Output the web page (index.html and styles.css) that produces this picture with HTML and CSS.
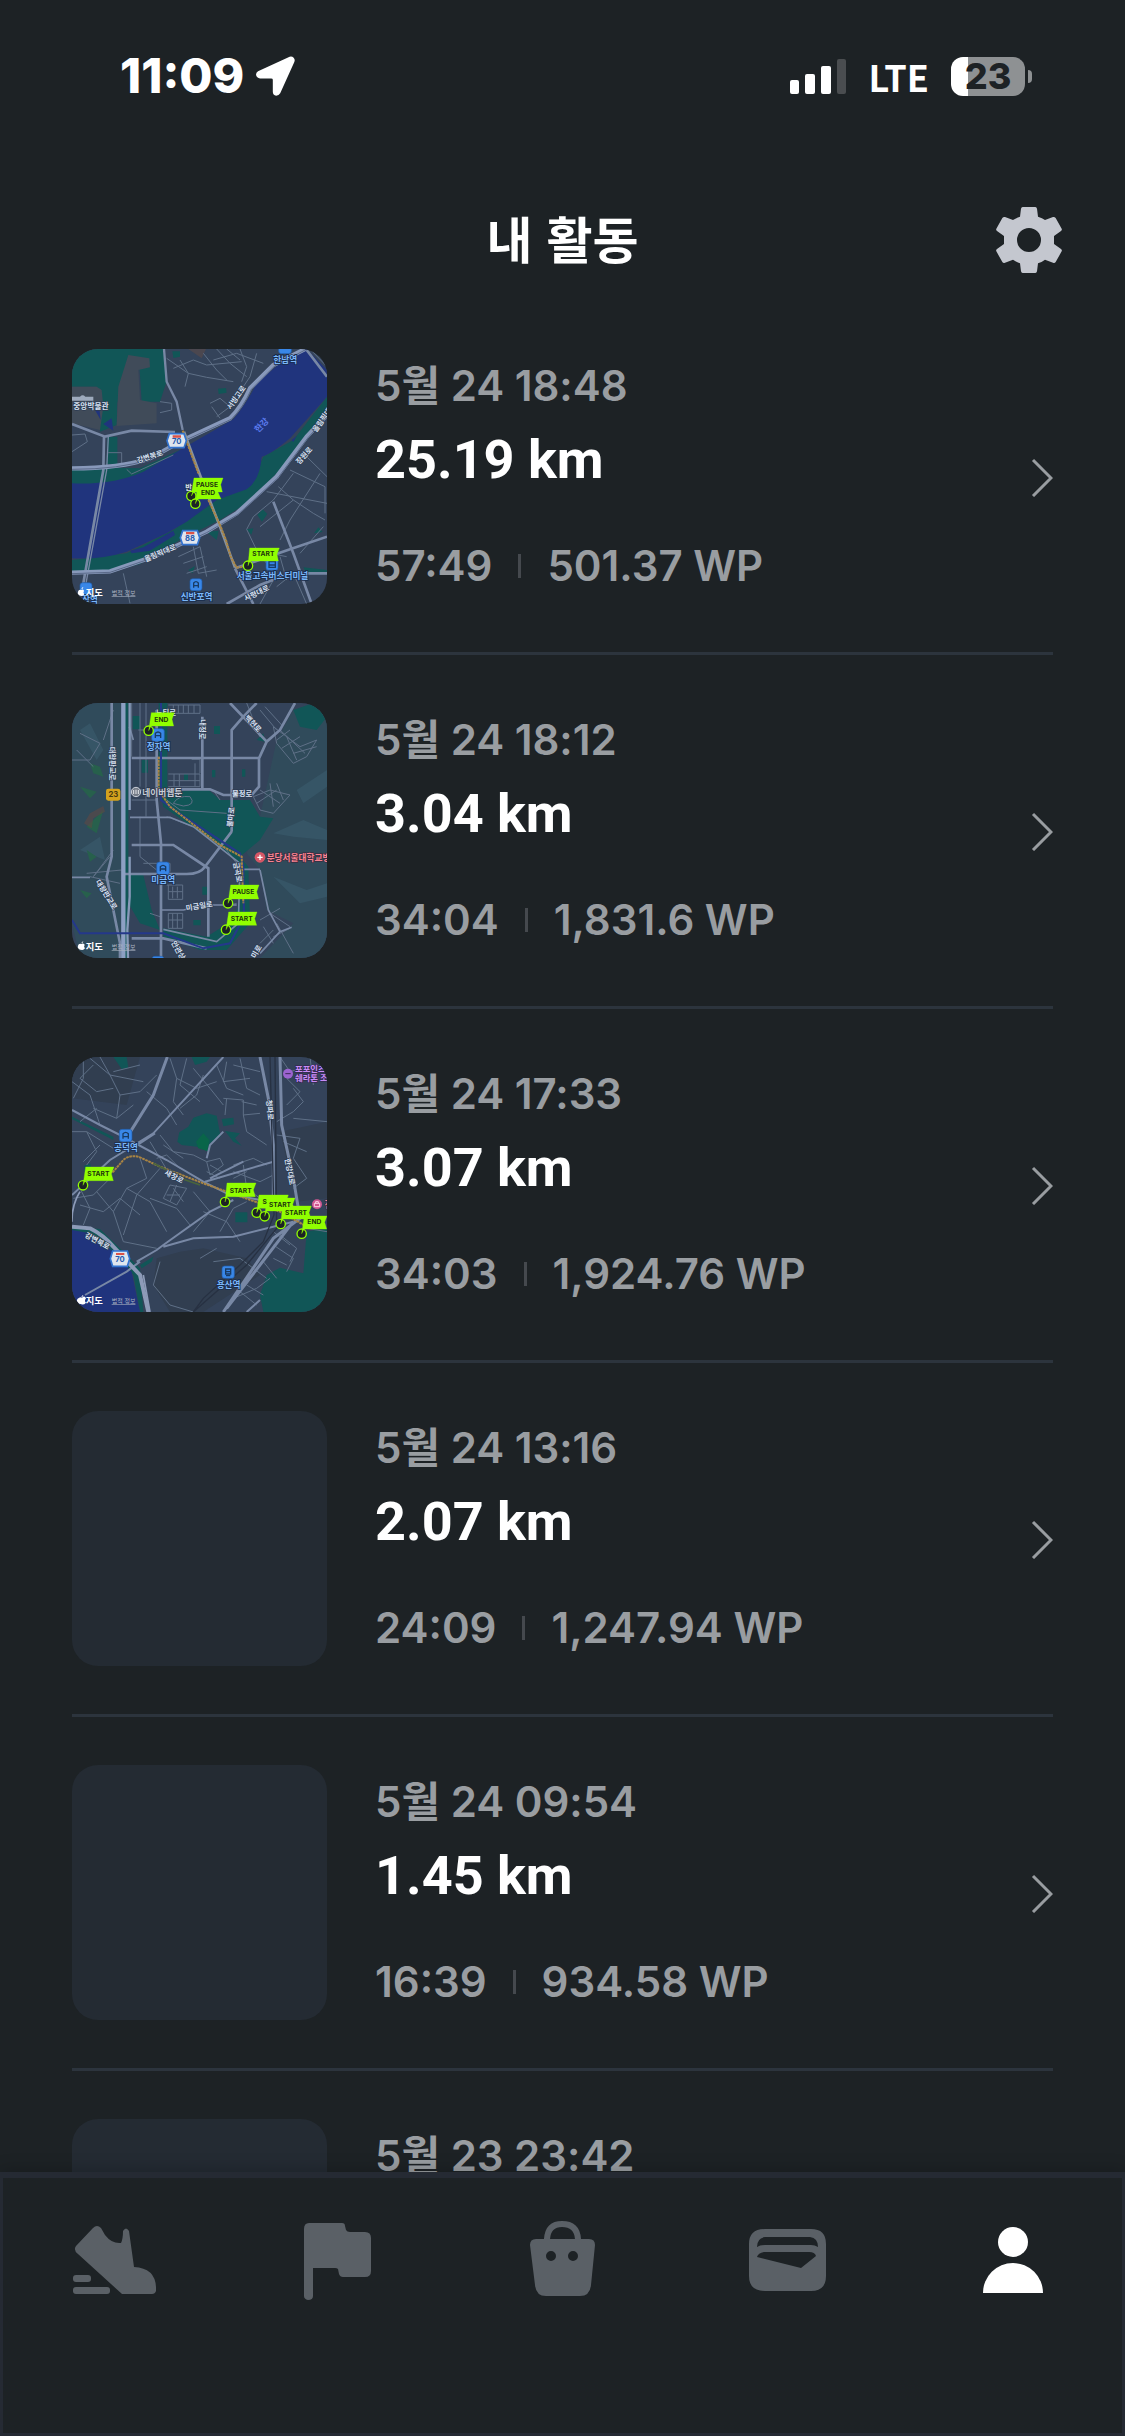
FILE: index.html
```html
<!DOCTYPE html>
<html lang="ko">
<head>
<meta charset="utf-8">
<meta name="viewport" content="width=device-width, initial-scale=1">
<title>내 활동</title>
<link rel="stylesheet" href="styles.css">
</head>
<body>
<div class="app">
  <div class="status">
    <div class="status-side">
      <span class="clock">11:09</span>
      <svg class="locate" viewBox="596 83 116 117" aria-hidden="true"><path fill="#fff" d="M602 127 696 84Q703 82 708 87 713 93 710 100L668 193Q664 200 656 200 646 198 646 188V153Q646 149 641 149H608Q598 148 596 138 596 131 602 127Z"/></svg>
    </div>
    <div class="status-side status-right">
      <svg class="signal" viewBox="0 0 56 35" aria-hidden="true"><g fill="#fff"><rect y="21" width="9" height="14" rx="2"/><rect x="15" y="15" width="10" height="20" rx="2"/><rect x="31" y="7" width="10" height="28" rx="2"/></g><rect x="47" width="9" height="35" rx="2" fill="#4a4d50"/></svg>
      <span class="network">LTE</span>
      <div class="battery"><span class="level">23</span><span class="nub"></span></div>
    </div>
  </div>

  <header class="header">
    <h1 class="title">내 활동</h1>
    <button class="settings" type="button" aria-label="설정">
      <svg viewBox="708 531 198 198" aria-hidden="true"><path fill="#c4c7cf" fill-rule="evenodd" d="M788 531H826Q830 531 831 536L834 560Q847 564 855 570L879 561Q884 560 887 564L905 596Q907 600 903 603L882 618V642L903 657Q907 660 905 664L887 696Q884 700 879 698L855 689Q846 696 834 700L831 724Q830 729 826 729H788Q784 729 783 724L780 700Q769 696 759 689L735 698Q730 700 727 696L709 664Q707 660 711 657L732 642V618L711 603Q707 600 709 596L727 564Q730 560 735 561L759 570Q768 564 780 560L783 536Q784 531 788 531ZM807 594A36 36 0 1 0 807 666 36 36 0 1 0 807 594Z"/></svg>
    </button>
  </header>

  <main class="list">
    <a class="row" href="#a1">
      <svg class="thumb" viewBox="36 27 765 765" aria-hidden="true">
        <rect class="land" x="36" y="27" width="765" height="765"/>
        <path class="park" d="M36 27H312L318 130 300 185H245L238 75H205L172 190 170 255 120 275 110 140H36ZM142 290H172V372H140ZM36 380 240 385 360 330 372 355 210 430 36 440ZM337 34H360V50L340 54ZM474 146 498 144 500 158 476 162ZM36 660 200 640 340 570 470 480 570 440 610 350 700 300 801 170V225L700 350 560 490 480 540 360 600 240 672 130 700H36ZM592 525 608 508 622 522 606 545ZM560 568 580 565 574 584ZM385 690 405 678 398 700ZM762 580 775 562 788 576ZM730 682 801 690V703H740ZM440 575 476 572 470 600Z"/>
        <path fill="#404b59" d="M36 140H110L125 150 130 200 120 270 36 250ZM205 45 268 55 270 82 235 90 240 180 290 190 290 250 170 258 175 140Z"/><path fill="#4b474f" d="M385 27H438L425 55Z"/>
        <path class="water" d="M36 430Q160 435 250 395L360 330 520 238Q560 190 590 130L660 70 740 27 801 90V170L690 295Q630 345 605 350 600 420 560 448L470 480 380 545 320 580 200 635Q120 660 36 655ZM105 210 118 205 122 240ZM130 252 155 235 160 272ZM210 632 250 622 340 572 345 585 270 632 215 640ZM695 300 710 288 700 306ZM325 362 372 342 374 350 330 368Z"/>
        <g class="lane"><path d="M320 55 385 100 440 112 520 125M340 85 400 60 440 75 545 65M430 40 470 90 500 120M460 60 530 40 610 70M540 27 560 80 545 125M470 27 510 70 560 110M360 60 385 100 375 140M500 27 540 60M590 40 570 110 550 140M300 185 335 190V210L300 218M450 190 480 175 510 200 530 160M455 200 480 235M470 230 510 200M36 285 75 282 82 305 36 335M145 338H185V370M200 388 215 402 340 345M640 480 580 530 560 568 585 620 640 700M655 440 700 480 760 520 795 540M690 390 795 440V520M700 400 640 480M740 350 801 410M620 455 801 490M600 560 700 480M780 400 690 540 660 600M720 640 790 560M355 650 420 620 440 710M370 670 430 650M380 700 440 680M400 620 415 700 470 690M190 700 210 790M640 720 600 792M650 740 700 700 740 792M660 650 680 720M630 640 680 650M750 27 801 80"/></g>
        <g class="road"><path stroke-width="7" d="M312 27 320 125 350 185 368 270"/><path stroke-width="8" d="M36 252 135 290 215 272 345 276M132 290 130 390 70 730M801 590 690 628 525 685M640 485 700 640 755 792M525 685 580 792M500 792 600 735 690 700 801 700M740 30 801 110"/><path stroke-width="4" d="M145 290 140 390 78 730"/></g>
        <path fill="none" stroke="#8899bb" stroke-width="13" d="M36 385Q180 385 270 355L370 300 510 235Q545 200 570 145L640 75 735 27M36 698 150 694 280 650 440 575 530 520 650 410 740 290 801 225"/>
        <path fill="none" stroke="#42516f" stroke-width="2" d="M36 388Q180 388 270 358L370 303 514 238Q549 203 574 148L644 78 735 30M36 701 150 697 280 653 440 578 534 523 654 413 744 293 801 230"/>
        <path fill="none" stroke="#8793a0" stroke-width="8" d="M372 275 420 405 480 560 525 683"/><path class="route" d="M368 272 415 400M445 480 480 555 498 600 512 650 530 683 565 678"/>
        <g class="label"><text x="40" y="206" font-size="23">중앙박물관</text><text transform="translate(233 369) rotate(-17)">강변북로</text><text transform="translate(257 666) rotate(-23)">올림픽대로</text><text transform="translate(512 210) rotate(-55)">서빙고로</text><text transform="translate(718 374) rotate(-48)">잠원로</text><text transform="translate(769 278) rotate(-55)">올림픽대로</text><text transform="translate(557 784) rotate(-26)">사평대로</text><text x="376" y="450">반</text></g>
        <g class="station"><rect x="656" y="5" width="38" height="36" rx="8"/><rect x="390" y="716" width="36" height="36" rx="8"/><rect x="618" y="655" width="36" height="36" rx="8"/><rect x="60" y="728" width="36" height="36" rx="8"/></g>
        <g class="blue"><text x="640" y="68">한남역</text><text x="530" y="718">서울고속버스터미널</text><text x="362" y="780">신반포역</text><text x="66" y="790">작역</text><text class="river" transform="translate(595 279) rotate(-46)">한강</text></g>
        <g fill="none" stroke="#183b64" stroke-width="4"><path d="M401 743V729Q408 721 415 729V743M401 737H415M627 665H646V682H627ZM627 675H646"/></g>
        <g class="shield"><path d="M328 281H372L379 302 372 323H328L321 302Z"/><path d="M368 572H412L419 593 412 614H368L361 593Z"/></g><path fill="#dc5348" d="M338 286H363V293H338ZM378 576H403V583H378Z"/><g class="number"><text x="350" y="313">70</text><text x="390" y="604">88</text></g>
        <path fill="#9daabd" d="M36 170H60Q68 162 76 170H100V182H36Z"/>
        <g class="pin"><circle cx="394" cy="468" r="14"/><path d="M402 414H489L482 434 487 456H395Z"/><circle cx="406" cy="491" r="14"/><path d="M412 438H483L474 457 483 477H408ZM394 468 400 450 404 452ZM406 491 410 472 414 474Z"/><circle cx="564" cy="677" r="14"/><path d="M569 624H658L651 643 655 663H570L564 677Z"/></g>
        <g class="flag-text"><text x="441" y="442">PAUSE</text><text x="444" y="465">END</text><text x="610" y="648">START</text></g>
        <g class="credit"><path d="M55 752Q60 747 64 750 69 746 72 752 68 758 73 763 68 770 63 767 56 769 53 760ZM64 748Q65 742 70 741 70 747 64 748Z"/><text x="77" y="767">지도</text><text class="legal" x="155" y="766">법적 정보</text></g>
      </svg>
      <div class="info"><p class="date">5월 24 18:48</p><p class="distance">25.19 km</p><p class="stats"><span>57:49</span><span class="bar"></span><span>501.37 WP</span></p></div>
      <svg class="chevron" viewBox="0 0 22 39" aria-hidden="true"><path d="M2 2 20 20 2 38"/></svg>
    </a>

    <a class="row" href="#a2">
      <svg class="thumb" viewBox="36 39 765 765" aria-hidden="true">
        <rect class="land" x="36" y="39" width="765" height="765"/>
        <path fill="#304b5b" d="M36 39H185V804H60L36 700ZM650 150 700 60 801 39V804H600L700 700 620 660 600 540 560 490 600 380Z"/>
        <path fill="#365566" d="M710 300 801 240V290L730 340ZM640 430 730 390 801 420V450L700 440ZM640 560 740 600 801 580V620L720 640ZM90 100 130 180 110 210 60 120ZM60 480 120 440 135 510Z"/>
        <path class="park" d="M190 39H205V804H190ZM296 39H322V310L440 295 480 330H570L600 380 640 385 600 450 540 500 565 530 570 700 500 780 420 780 310 740V715L440 740 520 690 545 620 550 530 480 470 310 350 296 290ZM210 555H250L275 660 300 720 240 700 205 640ZM700 60 760 39 801 80 770 120 720 110ZM218 78H240V118H218ZM245 210H264V248H245ZM462 108H480V132H462ZM456 240H466V262H456ZM546 238H556V260H546ZM427 590H447V614H427ZM400 690H422V706H400ZM372 252H384V272H372ZM590 150 610 130 615 155Z"/>
        <path fill="#27604c" d="M90 220 120 230 130 260 100 250ZM60 290 110 305 90 325ZM80 410 130 360 110 430ZM80 480 110 500 90 515ZM60 600 95 610 80 625Z"/><path fill="#65483f" opacity=".5" d="M72 400 90 370 130 348 135 365 100 385 95 415Z"/>
        <g class="lane"><path d="M215 39V200M240 39V290M258 39V380M235 120H290M325 45H420V70H325M340 45V70M355 45V70M370 45V70M385 45V70M402 45V70M325 252H420V290H325M395 208H420V250M405 220V290M342 252V290M358 252V290M325 272H420M215 330H290M215 300H290M240 380V500L290 540M320 380 400 410 500 480 530 520M320 585H368V628H325V585M338 590V625M352 590V625M325 605H368M325 670H368V715H325ZM338 670V715M352 670V715M325 690H368M250 550H300M250 520H330V545M300 680 270 670M560 80 600 140 560 39M600 60 650 120M615 50 665 105M640 110 720 170 770 150 740 200 700 220 650 160ZM660 120 735 190M680 140 710 210M650 150 690 120M665 175 720 140M700 190 770 170M580 320 630 300 690 315 640 370 600 360ZM630 280 640 350M600 300 660 340M650 280 670 330M590 340 650 300M340 340Q355 315 390 320 410 345 370 348ZM460 300 480 330M320 330 360 360 500 370M36 210H90L120 160 60 130M50 180 100 230M130 150 160 60M100 560 150 500M100 560 160 480M90 560 180 580M80 550 185 540M640 720 600 760M650 700 700 790M600 690 660 655M630 670 690 710M610 710 640 760M640 740 690 715M490 650 530 640"/></g>
        <g class="road"><path stroke-width="8" d="M155 39V500L140 560 180 760V804M215 204H597M320 298H450L490 315H580M290 60V330L303 460V804M427 80V300M515 425V120L550 80 590 39M510 39 620 155M705 39 660 120 620 155 597 205V290L575 315M515 425 435 530Q420 552 380 552H195M215 465H340L370 485 445 535V740M215 745H310L440 775"/><path stroke-width="5" d="M36 562H90M208 110 220 150M210 382H330L400 410 540 520 535 700 470 755 310 718M600 540 625 660 660 725 695 712M550 538H600M300 660H370L440 645H530M660 725 600 790"/></g>
        <path fill="none" stroke="#8da0c3" stroke-width="13" d="M190 39V804"/><path fill="none" stroke="#8799b8" stroke-width="7" d="M209 39V360M209 500V620L202 720 204 804"/>
        <path fill="none" stroke="#24388b" stroke-width="6" d="M303 39V330L350 365 540 490 550 530 552 680 510 760 430 775 310 730H60L36 690"/><path class="route" d="M296 200V300L330 350 480 465 545 500 550 640"/>
        <g class="label"><text transform="translate(150 170) rotate(90)">대왕판교로</text><text transform="translate(420 88) rotate(90)">내정로</text><text transform="translate(553 84) rotate(47)">백현로</text><text x="516" y="319">불정로</text><text transform="translate(517 412) rotate(-84)">불마로</text><text transform="translate(520 518) rotate(80)">금곡로</text><text transform="translate(106 575) rotate(58)">대왕판교로</text><text transform="translate(379 662) rotate(-9)">미금일로</text><text transform="translate(333 758) rotate(60)">안관상</text><text transform="translate(586 806) rotate(-60)">미로</text><text x="287" y="76">느티로</text></g>
        <text x="247" y="317" class="place">네이버웹툰</text><circle cx="228" cy="306" r="14" fill="#747b87" stroke="#cad0da" stroke-width="3"/><path stroke="#e6e8ec" stroke-width="3" d="M221 300V312M228 299V312M235 300V312"/>
        <g class="station"><rect x="275" y="116" width="38" height="38" rx="8"/><rect x="290" y="516" width="38" height="38" rx="8"/><rect x="276" y="799" width="36" height="30" rx="8"/></g><path fill="none" stroke="#183b64" stroke-width="4" d="M286 144V130Q294 122 302 130V144M286 137H302M301 544V530Q309 522 317 530V544M301 537H317"/>
        <g class="blue"><text x="260" y="180">정자역</text><text x="274" y="580">미금역</text></g>
        <rect x="138" y="296" width="43" height="36" rx="7" fill="#d4a21d"/><text class="number dark" x="160" y="321">23</text>
        <circle cx="600" cy="502" r="16" fill="#d65766"/><path stroke="#fff" stroke-width="4" d="M592 502H608M600 494V510"/><text class="hospital" x="620" y="513">분당서울대학교병원</text>
        <g class="pin"><circle cx="266" cy="122" r="14"/><path d="M274 68H343L336 88 341 108H273L266 122Z"/><circle cx="504" cy="640" r="14"/><path d="M512 585H597L590 605 596 627H511L504 640Z"/><circle cx="498" cy="719" r="14"/><path d="M506 666H591L584 686 590 706H505L498 719Z"/></g>
        <g class="flag-text"><text x="304" y="95">END</text><text x="550" y="612">PAUSE</text><text x="545" y="692">START</text></g>
        <g class="credit"><path d="M55 764Q60 759 64 762 69 758 74 764 70 770 75 775 70 782 63 779 56 781 53 772ZM64 760Q65 755 70 754 70 759 64 760Z"/><text x="77" y="779">지도</text><text class="legal" x="155" y="778">법적 정보</text></g>
      </svg>
      <div class="info"><p class="date">5월 24 18:12</p><p class="distance">3.04 km</p><p class="stats"><span>34:04</span><span class="bar"></span><span>1,831.6 WP</span></p></div>
      <svg class="chevron" viewBox="0 0 22 39" aria-hidden="true"><path d="M2 2 20 20 2 38"/></svg>
    </a>

    <a class="row" href="#a3">
      <svg class="thumb" viewBox="36 36 765 765" aria-hidden="true">
        <rect class="land" x="36" y="36" width="765" height="765"/>
        <path fill="#313e50" d="M360 620 430 610 560 640 600 690 430 801H330L280 720 290 640ZM36 36H240L200 180 36 160ZM660 260 801 230V460L710 470Z"/>
        <path class="park" d="M160 36H200L205 68 185 72ZM395 36H450L440 50 405 60ZM352 290 358 262 385 245 400 218 440 205 470 212 482 275 450 295 445 320 410 305 365 300ZM485 222 520 218 522 238 490 244ZM495 258 540 265 525 280 545 302 520 290ZM526 502H562V532H526ZM72 362 90 355 95 372 75 382ZM36 215 160 275V285L36 222ZM36 545 120 552 200 630 240 670 250 801H240L220 690 100 570 36 560ZM740 560 801 550V801H610L600 750 620 690 660 668 730 685ZM240 660 280 635 275 650 245 670Z"/><path fill="#096549" d="M408 290 430 265 448 285 442 318 415 310Z"/>
        <path class="water" d="M36 555 90 565 160 620 215 680 240 801H36Z"/>
        <g class="lane"><path d="M70 36V100L40 160M90 40 150 90 180 150 170 220M120 36 150 90 250 110M100 60 60 100 110 140 160 130M36 110 90 150 120 240M160 80 240 60M180 150 240 140 290 90M100 190 170 220 220 180M60 230 110 190M36 260 80 260 110 320 80 360M80 260 160 310M120 300 70 350M260 140 320 190 350 240M330 40 350 100 410 130 470 110M350 100 340 170 370 210M380 40 360 120 420 170M400 70 450 130 490 180M430 90 410 150 360 190M470 60 500 130 550 150M500 50 490 110 570 100M520 60 600 80M540 40 560 130 600 150M490 160 550 165V210L600 205M500 160 495 210M550 210 560 260 620 300M545 170 590 180M300 270 340 320 400 330 440 350M310 300 370 340M290 340 320 330 360 370M270 290 330 390M240 340 260 400 200 430 160 500M300 370 230 450 190 570M330 420 380 430 350 480 310 460ZM340 430 370 470M320 450 360 450M350 420 330 470M60 480 130 500 180 460 240 510M40 460 100 450 150 400M60 430 90 490 70 540M110 440 160 500 190 590 290 610M200 430 270 470 320 560M270 460 350 490 390 540M400 440 450 500 400 560M430 500 500 530 540 590M480 560 520 490 560 470M440 350 480 340 490 360 450 390ZM450 360 485 380M440 380 480 400M520 360 580 340 620 360M520 380 600 410 640 390M550 360 560 430 600 460M520 400 560 380M660 36 690 80 760 60M680 100 720 140 680 180M700 130 730 170 700 200 650 230M650 270 720 280 700 340M670 290 740 320M700 340 740 400 700 430M750 36 760 120M700 220 801 230M640 600 700 640 680 680M660 570 710 610 690 650M640 640 680 660M610 650 650 700M460 650 540 640 620 700M420 640 470 610M520 760 590 730 630 700M540 740 590 780M560 720 610 750M300 650 280 720 330 780 400 801M640 560 690 600M700 510 740 550 801 560"/></g>
        <g class="road"><path stroke-width="6" d="M36 195 120 240 180 270 320 345 430 410 500 445 600 465M36 450 150 345 280 265 490 36M180 300 240 295 285 265M310 600 450 500 520 465M435 410 640 350M310 605 400 580 520 575 700 530M230 650 290 615 310 600M75 750 200 680 240 650M600 765 560 801M450 400 550 350M440 340 450 300 490 260"/><path stroke-width="9" d="M322 36 280 150 180 310M600 36 625 160 640 300V450M660 36 665 240 700 400 720 520 640 580 490 801M700 530 500 790"/></g>
        <path fill="none" stroke="#273142" stroke-width="4" d="M630 36 642 510 610 590 540 660 430 760 400 801M645 36 650 550 560 660 400 801"/>
        <path fill="none" stroke="#8d9bb8" stroke-width="12" d="M36 545 90 550Q130 570 160 605L240 690 265 801"/>
        <path fill="none" stroke="#8d9bb8" stroke-width="5" d="M250 690 270 801M36 530Q35 480 60 440"/>
        <path class="route" d="M100 400 160 380 190 345Q210 327 240 337L300 365 430 415 500 440 600 475 660 500 740 545"/><path fill="none" stroke="#49653c" stroke-width="5" d="M280 355 320 375M370 403 420 420"/>
        <g class="label"><text transform="translate(312 388) rotate(27)">새창로</text><text transform="translate(73 575) rotate(29)">강변북로</text><text transform="translate(619 165) rotate(85)">청파로</text><text transform="translate(674 342) rotate(79)">한강대로</text></g>
        <g class="station"><rect x="178" y="253" width="38" height="37" rx="8"/><rect x="486" y="663" width="37" height="37" rx="8"/></g><path fill="none" stroke="#183b64" stroke-width="4" d="M189 281V266Q197 258 205 266V281M189 275H205M497 672H512V687H497ZM497 680H512M498 692H511"/>
        <g class="blue"><text x="162" y="318">공덕역</text><text x="470" y="728">용산역</text></g>
        <g class="shield"><path d="M158 618H202L209 641 202 664H158L151 641Z"/></g><path fill="#dc5348" d="M168 624H193V630H168Z"/><text class="number" x="180" y="651">70</text>
        <circle cx="684" cy="86" r="15" fill="#9b63cf"/><path stroke="#3d2658" stroke-width="3" d="M676 86H692"/><g class="hotel"><text x="705" y="81">포포인츠</text><text x="705" y="109">쉐라톤 조</text></g>
        <circle cx="771" cy="478" r="15" fill="#cf5690"/><path fill="none" stroke="#ffd3e7" stroke-width="3" d="M763 475H779V485H763ZM767 475V470H775V475"/><text class="hospital" x="794" y="488">전</text>
        <g class="pin"><circle cx="69" cy="421" r="14"/><path d="M77 366H162L154 386 160 407H76L69 421Z"/><circle cx="495" cy="471" r="14"/><path d="M501 414H588L580 435 586 455H501L495 471Z"/><circle cx="590" cy="503" r="14"/><path d="M597 450H685L678 470 684 490H597L590 503Z"/><circle cx="614" cy="514" r="14"/><path d="M621 459H705L698 478 704 498H621L614 514Z"/><circle cx="662" cy="537" r="14"/><path d="M668 483H754L747 503 753 522H669L662 537Z"/><circle cx="725" cy="566" r="14"/><path d="M733 513H801L794 532 800 552H732L725 566Z"/></g>
        <g class="flag-text"><text x="115" y="393">START</text><text x="542" y="443">START</text><text x="614" y="476">S</text><text x="660" y="486">START</text><text x="708" y="509">START</text><text x="763" y="537">END</text></g>
        <g class="credit"><path d="M52 762Q60 755 66 758 74 750 78 760 72 768 78 773 70 782 63 777 56 779 50 770ZM64 757Q65 751 70 750 70 756 64 757Z"/><text x="77" y="776">지도</text><text class="legal" x="155" y="775">법적 정보</text></g>
      </svg>
      <div class="info"><p class="date">5월 24 17:33</p><p class="distance">3.07 km</p><p class="stats"><span>34:03</span><span class="bar"></span><span>1,924.76 WP</span></p></div>
      <svg class="chevron" viewBox="0 0 22 39" aria-hidden="true"><path d="M2 2 20 20 2 38"/></svg>
    </a>

    <a class="row" href="#a4">
      <div class="thumb"></div>
      <div class="info"><p class="date">5월 24 13:16</p><p class="distance">2.07 km</p><p class="stats"><span>24:09</span><span class="bar"></span><span>1,247.94 WP</span></p></div>
      <svg class="chevron" viewBox="0 0 22 39" aria-hidden="true"><path d="M2 2 20 20 2 38"/></svg>
    </a>

    <a class="row" href="#a5">
      <div class="thumb"></div>
      <div class="info"><p class="date">5월 24 09:54</p><p class="distance">1.45 km</p><p class="stats"><span>16:39</span><span class="bar"></span><span>934.58 WP</span></p></div>
      <svg class="chevron" viewBox="0 0 22 39" aria-hidden="true"><path d="M2 2 20 20 2 38"/></svg>
    </a>

    <a class="row" href="#a6">
      <div class="thumb"></div>
      <div class="info"><p class="date">5월 23 23:42</p></div>
    </a>
  </main>

  <nav class="tabs">
    <a class="tab" href="#run" aria-label="러닝"><svg viewBox="0 0 90 84"><path d="M8 29 25 11Q29 7 33 11L37 18Q44 27 53 26 55 22 55 14 58 9 61 14L66 50Q87 51 88 70V74Q87 77 84 77H54L10 37Q5 33 8 29Z"/><rect x="5" y="58" width="18" height="7" rx="3"/><rect x="5" y="70" width="37" height="7" rx="3"/></svg></a>
    <a class="tab" href="#challenge" aria-label="챌린지"><svg viewBox="0 0 90 84"><path d="M11 12Q11 6 16 6H49Q52 6 52 9L53 13Q54 15 57 15H72Q78 15 78 21V54Q78 60 72 60H50Q47 60 46 57L45 52Q44 51 42 51H20V79Q20 83 15 83 11 82 11 79Z"/></svg></a>
    <a class="tab" href="#shop" aria-label="상점"><svg viewBox="0 0 90 84"><path d="M29 24V22Q30 7 44 7 59 7 60 22V24" fill="none" stroke="#5a6066" stroke-width="6"/><path fill-rule="evenodd" d="M18 22H71Q77 22 77 28L73 68Q72 79 62 79H28Q18 79 17 68L12 28Q12 22 18 22ZM33 34A5 5 0 1 0 33 44 5 5 0 1 0 33 34ZM55 34A5 5 0 1 0 55 44 5 5 0 1 0 55 34Z"/></svg></a>
    <a class="tab" href="#wallet" aria-label="지갑"><svg viewBox="0 0 90 84"><path fill-rule="evenodd" d="M22 12H68Q83 12 83 27V59Q83 74 68 74H22Q6 74 6 59V27Q6 12 22 12ZM22 20Q14 21 14 30 17 28 22 28H68Q72 28 75 30 75 21 67 20ZM21 35Q15 36 14 40L58 51 73 39Q72 35 66 35Z"/></svg></a>
    <a class="tab active" href="#me" aria-label="내 활동" aria-current="page"><svg viewBox="0 0 90 84"><circle cx="45" cy="25" r="15"/><path d="M15 76A30 30 0 0 1 75 76Z"/></svg></a>
  </nav>
</div>
</body>
</html>
```
FILE: styles.css
```css
* { box-sizing: border-box; }
body {
  margin: 0;
  background: #1d2225;
  color: #fff;
  font-family: Inter, "Noto Sans CJK KR", sans-serif;
}
p, h1 { margin: 0; }
svg { display: block; }

.app { height: 100vh; display: flex; flex-direction: column; overflow: hidden; }

.status {
  flex: none;
  height: 152px;
  padding: 0 93px 0 120px;
  display: flex;
  align-items: center;
  justify-content: space-between;
}
.status-side { display: flex; align-items: center; gap: 12px; }
.status-right { gap: 22px; }
.clock { font-size: 48px; font-weight: 800; line-height: 48px; }
.locate { width: 39px; height: 40px; }
.signal { width: 56px; height: 35px; }
.network { font: 700 36px/40px "Noto Sans CJK KR", sans-serif; }
.battery {
  position: relative;
  width: 74px;
  height: 39px;
  margin-right: 7px;
  border-radius: 12px;
  background: linear-gradient(90deg, #fff 17px, #8e9193 17px);
  display: flex;
  align-items: center;
  justify-content: center;
}
.level { font-size: 36px; font-weight: 800; line-height: 39px; color: #1d2225; }
.nub {
  position: absolute;
  right: -7px;
  top: 13px;
  width: 4px;
  height: 13px;
  border-radius: 0 4px 4px 0;
  background: #8e9193;
}

.header {
  flex: none;
  padding: 55px 63px 28px;
  display: grid;
  grid-template-columns: 66px 1fr 66px;
  align-items: start;
}
.title {
  grid-column: 2;
  text-align: center;
  font: 700 50px/60px "Noto Sans CJK KR", sans-serif;
}
.settings { width: 66px; height: 66px; padding: 0; border: 0; background: none; }

.list { flex: 1; min-height: 0; padding: 0 72px; overflow-y: auto; scrollbar-width: none; }
.row {
  display: flex;
  align-items: center;
  gap: 48px;
  padding: 48px 0;
  border-bottom: 3px solid #2c343d;
  color: inherit;
  text-decoration: none;
}
.thumb { flex: none; width: 255px; height: 255px; border-radius: 26px; background: #242b33; overflow: hidden; }
.info { flex: 1; align-self: flex-start; padding-top: 10px; }
.date, .stats { font-size: 42px; font-weight: 600; line-height: 54px; color: #999da1; }
.distance { margin: 14px 0 46px; font: 700 54px/66px Roboto, sans-serif; }
.stats { display: flex; align-items: center; gap: 26px; }
.bar { width: 3px; height: 24px; background: #45494e; }
.chevron { width: 22px; height: 39px; margin-top: 2px; fill: none; stroke: #999da1; stroke-width: 3; }

.tabs {
  flex: none;
  height: 264px;
  padding-top: 45px;
  display: flex;
  background: #1d2225;
  box-shadow: inset 0 3px 0 3px #252a33, inset 0 0 0 3px #252a33, 0 -2px 16px rgba(0, 0, 0, .2);
  z-index: 1;
}
.tab { flex: 1; display: flex; justify-content: center; align-items: flex-start; }
.tab svg { width: 90px; height: 84px; fill: #5a6066; }
.active svg { fill: #fff; }

.land { fill: #34435a; }
.park { fill: #115657; }
.water { fill: #20347d; }
.lane { fill: none; stroke: #5f7087; stroke-width: 3; }
.road { fill: none; stroke: #7888a5; }
.route { fill: none; stroke: #a98443; stroke-width: 6; stroke-dasharray: 8 2; }
.label { fill: #d7e0f0; stroke: #2c3a52; stroke-width: 4; paint-order: stroke; font-size: 22px; font-weight: 700; }
.place { fill: #c8cdd6; stroke: #2b364a; stroke-width: 4; paint-order: stroke; font-size: 26px; font-weight: 700; }
.blue { fill: #7ab6f8; stroke: #182c4c; stroke-width: 5; paint-order: stroke; font-size: 26px; font-weight: 700; }
.river { fill: #5d7df0; stroke: none; }
.station { fill: #3987e8; stroke: #205cab; stroke-width: 2; }
.shield { fill: #dfe5ee; stroke: #3273d0; stroke-width: 5; }
.number { fill: #285cae; font-size: 23px; font-weight: 700; text-anchor: middle; }
.dark { fill: #493910; }
.hospital { fill: #f88391; stroke: #3b2c3e; stroke-width: 4; paint-order: stroke; font-size: 26px; font-weight: 700; }
.hotel { fill: #c88cf5; stroke: #342a50; stroke-width: 4; paint-order: stroke; font-size: 25px; font-weight: 700; }
.pin { stroke: #91ff00; stroke-width: 4; }
.pin circle { fill: #1d2225; }
.pin path { fill: #91ff00; stroke: #91ff00; stroke-width: 1; }
.flag-text { fill: #20350d; font-size: 20px; font-weight: 700; text-anchor: middle; }
.credit { fill: #fff; font-size: 28px; font-weight: 600; }
.legal { fill: #aab2c0; font-size: 18px; font-weight: 400; text-decoration: underline; }
```
